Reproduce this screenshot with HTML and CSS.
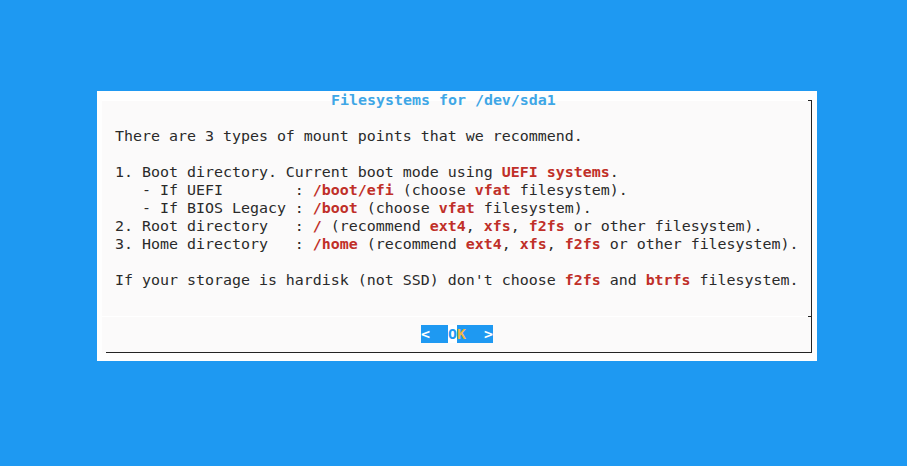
FILE: index.html
```html
<!DOCTYPE html>
<html>
<head>
<meta charset="utf-8">
<link rel="stylesheet" href="styles.css">
</head>
<body>
<div class="dialog">
  <div class="frame">
    <div class="title">Filesystems for /dev/sda1</div>
    <div class="msg">
      <div class="line">There are 3 types of mount points that we recommend.</div>
      <div class="line"> </div>
      <div class="line">1. Boot directory. Current boot mode using <b class="hl">UEFI systems</b>.</div>
      <div class="line">   - If UEFI        : <b class="hl">/boot/efi</b> (choose <b class="hl">vfat</b> filesystem).</div>
      <div class="line">   - If BIOS Legacy : <b class="hl">/boot</b> (choose <b class="hl">vfat</b> filesystem).</div>
      <div class="line">2. Root directory   : <b class="hl">/</b> (recommend <b class="hl">ext4</b>, <b class="hl">xfs</b>, <b class="hl">f2fs</b> or other filesystem).</div>
      <div class="line">3. Home directory   : <b class="hl">/home</b> (recommend <b class="hl">ext4</b>, <b class="hl">xfs</b>, <b class="hl">f2fs</b> or other filesystem).</div>
      <div class="line"> </div>
      <div class="line">If your storage is hardisk (not SSD) don't choose <b class="hl">f2fs</b> and <b class="hl">btrfs</b> filesystem.</div>
    </div>
    <div class="sep"></div>
    <div class="buttons">
      <div class="btn"><span class="arrow">&lt;</span>  <span class="hot">O</span><span class="key">K</span>  <span class="arrow">&gt;</span></div>
    </div>
  </div>
</div>
</body>
</html>
```

FILE: styles.css
```css
html, body {
  margin: 0;
  padding: 0;
}
body {
  background: #1e99f2;
  width: 907px;
  height: 466px;
  padding: 91px 0 0 97px;
  box-sizing: border-box;
  font-family: "DejaVu Sans Mono", "Liberation Mono", monospace;
  font-size: 14.95px;
  line-height: 18px;
  color: #2a2a2a;
}
.dialog {
  width: 720px;
  height: 270px;
  background: #fefefe;
  padding: 9px 5px 8px 5px;
  box-sizing: border-box;
}
.frame {
  width: 710px;
  height: 253px;
  box-sizing: border-box;
  border-right: 1px solid #242424;
  background:
    linear-gradient(#242424, #242424) no-repeat right 0 top 0 / 3px 1px,
    linear-gradient(#242424, #242424) no-repeat left 4px bottom 0 / calc(100% - 4px) 1px,
    linear-gradient(#ffffff, #ffffff) no-repeat left 0 top 0 / 100% 1px,
    #fbfafa;
  display: flex;
  flex-direction: column;
}
.title {
  margin-top: -9px;
  height: 18px;
  padding-left: 229px;
  font-weight: bold;
  color: #3fa7e6;
  white-space: pre;
}
.msg {
  margin-top: 18px;
  padding-left: 13px;
}
.line {
  height: 18px;
  white-space: pre;
}
.hl {
  color: #c02f28;
  font-weight: bold;
}
.sep {
  margin-top: 27px;
  height: 1px;
  background:
    linear-gradient(#242424, #242424) no-repeat right 0 top 0 / 3px 1px,
    #ffffff;
}
.buttons {
  margin-top: 8px;
  height: 18px;
  display: flex;
  padding-left: 319px;
}
.btn {
  width: 72px;
  height: 18px;
  background: #1e99f2;
  white-space: pre;
  font-weight: bold;
  color: #ffffff;
}
.hot {
  background: #ffffff;
  color: #1e99f2;
}
.key {
  color: #f2b63f;
}
```
